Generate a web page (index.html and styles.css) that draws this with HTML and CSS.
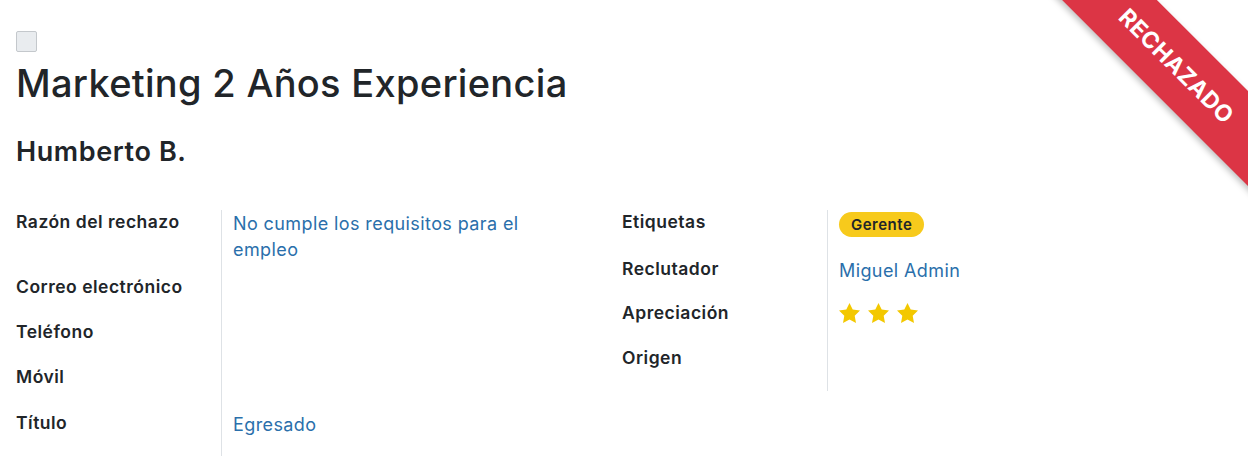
FILE: index.html
```html
<!DOCTYPE html>
<html lang="es">
<head>
<meta charset="utf-8">
<title>Marketing 2 Años Experiencia</title>
<link rel="stylesheet" href="styles.css">
</head>
<body>
<div class="sheet">
  <div class="ribbon"><span>RECHAZADO</span></div>
  <div class="title-area">
    <span class="check"></span>
    <h1 class="title">Marketing 2 Años Experiencia</h1>
    <h2 class="subtitle">Humberto B.</h2>
  </div>
  <div class="groups">
    <div class="group">
      <div class="row">
        <div class="label">Razón del rechazo</div>
        <div class="value"><span class="link wrap">No cumple los requisitos para el empleo</span></div>
      </div>
      <div class="row">
        <div class="label">Correo electrónico</div>
        <div class="value"></div>
      </div>
      <div class="row">
        <div class="label">Teléfono</div>
        <div class="value"></div>
      </div>
      <div class="row row-46">
        <div class="label">Móvil</div>
        <div class="value"></div>
      </div>
      <div class="row">
        <div class="label">Título</div>
        <div class="value link">Egresado</div>
      </div>
    </div>
    <div class="group">
      <div class="row row-47">
        <div class="label">Etiquetas</div>
        <div class="value"><span class="badge">Gerente</span></div>
      </div>
      <div class="row row-44">
        <div class="label">Reclutador</div>
        <div class="value link">Miguel Admin</div>
      </div>
      <div class="row">
        <div class="label">Apreciación</div>
        <div class="value stars">
          <svg viewBox="1.5 1.5 21 21" class="star"><path d="M12 1.5l3.2 6.6 7.3 1-5.3 5.1 1.3 7.2L12 18l-6.5 3.4 1.3-7.2-5.3-5.1 7.3-1z"/></svg>
          <svg viewBox="1.5 1.5 21 21" class="star"><path d="M12 1.5l3.2 6.6 7.3 1-5.3 5.1 1.3 7.2L12 18l-6.5 3.4 1.3-7.2-5.3-5.1 7.3-1z"/></svg>
          <svg viewBox="1.5 1.5 21 21" class="star"><path d="M12 1.5l3.2 6.6 7.3 1-5.3 5.1 1.3 7.2L12 18l-6.5 3.4 1.3-7.2-5.3-5.1 7.3-1z"/></svg>
        </div>
      </div>
      <div class="row">
        <div class="label">Origen</div>
        <div class="value"></div>
      </div>
    </div>
  </div>
</div>
</body>
</html>
```

FILE: styles.css
```css
* { box-sizing: border-box; }
html, body { margin: 0; padding: 0; background: #fff; }
body {
  font-family: Inter, "Noto Sans", "Liberation Sans", sans-serif;
  color: #212529;
  overflow: hidden;
}
.sheet {
  position: relative;
  width: 1248px;
  height: 469px;
  overflow: hidden;
  padding: 31px 16px 0 16px;
}
.ribbon {
  position: absolute;
  top: 0;
  right: 0;
  width: 200px;
  height: 200px;
  overflow: hidden;
}
.ribbon span {
  position: absolute;
  left: -22px;
  top: 33px;
  width: 300px;
  height: 67px;
  background: #dc3545;
  color: #fff;
  font-weight: 700;
  font-size: 23px;
  text-align: center;
  line-height: 67px;
  letter-spacing: 0.4px;
  transform: rotate(45deg);
  box-shadow: 0 3px 6px rgba(0,0,0,0.25);
}
.title-area { display: flex; flex-direction: column; align-items: flex-start; }
.check {
  display: block;
  width: 21px;
  height: 21px;
  background: #e9ecef;
  border: 1px solid #c4c8cc;
  border-radius: 2px;
}
.title {
  margin: 8px 0 0 0;
  font-size: 38px;
  line-height: 46px;
  font-weight: 500;
  letter-spacing: 0.3px;
  color: #212529;
}
.subtitle {
  margin: 29px 0 0 0;
  font-size: 27px;
  line-height: 34px;
  font-weight: 600;
  letter-spacing: 0.6px;
  color: #212529;
}
.groups {
  display: grid;
  grid-template-columns: 606px 606px;
  margin-top: 41px;
}
.group { display: flex; flex-direction: column; }
.row {
  display: grid;
  grid-template-columns: 206px 1fr;
}
.label {
  min-height: 45px;
  font-size: 17.5px;
  font-weight: 600;
  line-height: 24px;
  letter-spacing: 0.5px;
  border-right: 1px solid #dee2e6;
  padding-right: 8px;
  white-space: nowrap;
}
.value {
  padding: 1px 0 12px 11px;
  font-size: 18px;
  line-height: 26px;
  letter-spacing: 0.4px;
}
.wrap { display: block; max-width: 320px; }
.link { color: #2a6fab; }
.row-46 .label { min-height: 46px; }
.row-47 .label { min-height: 47px; }
.row-44 .label { min-height: 44px; }
.badge {
  display: inline-block;
  margin-top: 1px;
  background: #f7ca1c;
  color: #212529;
  font-size: 15px;
  font-weight: 600;
  letter-spacing: 0.5px;
  line-height: 25px;
  height: 25px;
  padding: 0 12px;
  border-radius: 13px;
  vertical-align: top;
}
.stars { display: flex; gap: 8px; padding-top: 2px; }
.star { width: 21px; height: 21px; fill: #f3c800; }
```
